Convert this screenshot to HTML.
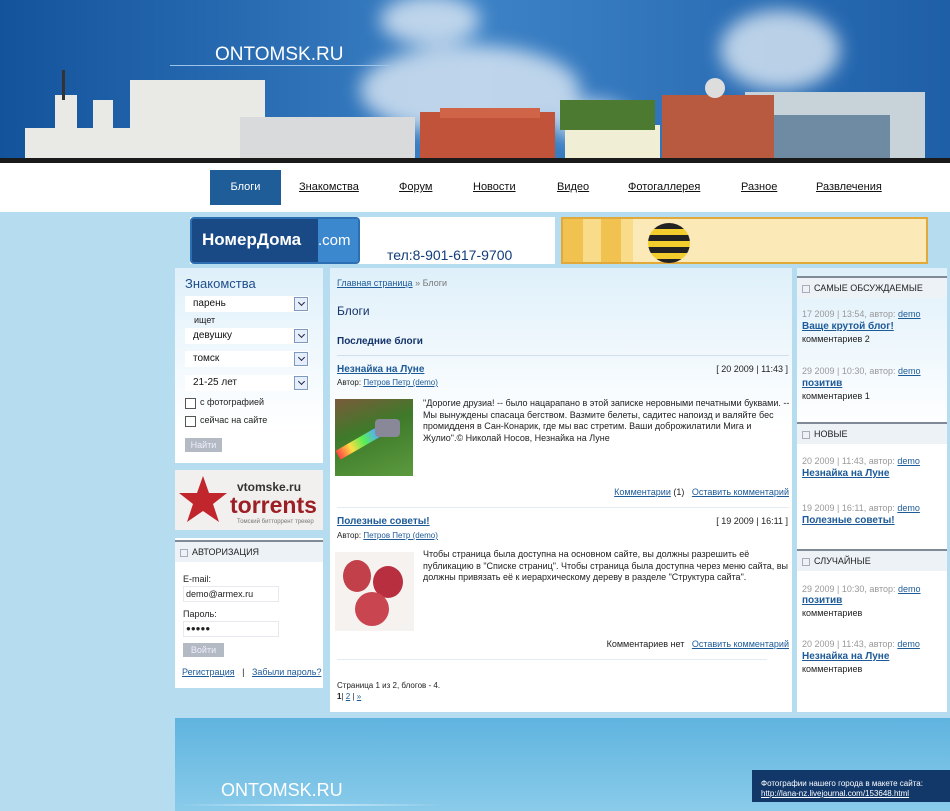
<!DOCTYPE html>
<html><head><meta charset="utf-8"><style>
*{margin:0;padding:0;box-sizing:border-box}
body{width:950px;height:811px;overflow:hidden;background:#b5dcef;font-family:"Liberation Sans",sans-serif;font-size:10px;color:#222;position:relative}
a{color:#1d5a98;text-decoration:underline}
.abs{position:absolute}
#nav{top:163px;left:0;width:950px;height:49px;background:#fff}
#nav a{position:absolute;top:18px;color:#111;font-size:11px}
.act{position:absolute;left:210px;top:7px;width:71px;height:35px;background:#1f5d98;color:#fff;font-size:11px;text-align:center;line-height:35px}
.box{background:linear-gradient(#dff0fa,#fff 160px);position:absolute}
.sel{position:absolute;left:10px;width:124px;height:16px;background:#fff;font-size:10px;padding:2px 8px;color:#111}
.sel:after{content:"";position:absolute;right:1px;top:1px;width:12px;height:12px;border:1px solid #7d9bbf;background:#e5eefa}
.sel:before{content:"";position:absolute;right:5px;top:4px;width:4px;height:4px;border-right:1px solid #224;border-bottom:1px solid #224;transform:rotate(45deg);z-index:1}
.cb{position:absolute;left:10px;width:11px;height:11px;border:1px solid #555;background:#fff}
.btn{position:absolute;background:#b3bac3;color:#eef;font-size:9px;text-align:center;line-height:14px}
.hd{position:absolute;left:0;width:100%;height:22px;border-top:2px solid #7f8a96;background:#edf2f7;font-size:9px;line-height:20px;padding-left:17px;color:#222}
.hd:before{content:"";position:absolute;left:5px;top:7px;width:6px;height:6px;border:1px solid #aab}
.gr{color:#999;font-size:9px}
.rb{position:absolute;left:5px;font-size:9px;line-height:12px}
.rb a{font-weight:bold;font-size:10px}
.gr a{font-weight:normal;font-size:9px}
</style></head><body>
<svg class="abs" style="left:0;top:0" width="950" height="163">
<defs><linearGradient id="sk" x1="0" y1="0" x2="1" y2="0"><stop offset="0" stop-color="#13539c"/><stop offset=".5" stop-color="#3d82c6"/><stop offset="1" stop-color="#1e5fa8"/></linearGradient>
<filter id="bl"><feGaussianBlur stdDeviation="9"/></filter></defs>
<rect width="950" height="163" fill="url(#sk)"/>
<g filter="url(#bl)" fill="#dfeaf5" opacity=".8"><ellipse cx="470" cy="90" rx="110" ry="45"/><ellipse cx="430" cy="20" rx="50" ry="25"/><ellipse cx="780" cy="50" rx="60" ry="40"/><ellipse cx="590" cy="120" rx="40" ry="20"/></g>
<text x="215" y="60" fill="#fff" font-family="Liberation Sans" font-size="19">ONTOMSK.RU</text>
<rect x="170" y="65" width="220" height="1" fill="#9cc3e8"/>
<g fill="#e9e9e6"><rect x="25" y="128" width="110" height="32"/><rect x="55" y="95" width="22" height="35"/><rect x="93" y="100" width="20" height="30"/><rect x="130" y="80" width="135" height="80"/><rect x="240" y="117" width="175" height="43" fill="#d8dadc"/><rect x="565" y="125" width="95" height="35" fill="#f0eed4"/><rect x="745" y="92" width="180" height="68" fill="#c7d2d9"/><rect x="760" y="115" width="130" height="45" fill="#6e8ba3"/></g>
<rect x="62" y="70" width="3" height="30" fill="#333"/>
<rect x="420" y="112" width="135" height="48" fill="#c0533a"/><rect x="440" y="108" width="100" height="10" fill="#d06448"/>
<rect x="662" y="95" width="112" height="65" fill="#b85a40"/><circle cx="715" cy="88" r="10" fill="#ddd"/>
<rect x="560" y="100" width="95" height="30" fill="#4b7a30"/>
<rect x="0" y="158" width="950" height="5" fill="#1a1a1a"/>
</svg>
<div id="nav" class="abs"><div class="act">Блоги</div>
<a style="left:299px">Знакомства</a><a style="left:399px">Форум</a><a style="left:473px">Новости</a><a style="left:557px">Видео</a><a style="left:628px">Фотогаллерея</a><a style="left:741px">Разное</a><a style="left:816px">Развлечения</a></div>
<div class="abs" style="left:190px;top:217px;width:365px;height:47px;background:#fff"></div>
<div class="abs" style="left:190px;top:217px;width:170px;height:47px;background:#1a4a86;border-radius:4px;border:2px solid #2c6fb3"><div style="position:absolute;right:0;top:0;width:40px;height:43px;background:#3b88cf"></div><span style="position:absolute;left:10px;top:11px;color:#fff;font-size:17px;font-weight:bold">НомерДома</span><span style="position:absolute;left:126px;top:13px;color:#fff;font-size:15px">.com</span></div>
<div class="abs" style="left:387px;top:247px;color:#123c7a;font-size:14px">тел:8-901-617-9700</div>
<div class="abs" style="left:561px;top:217px;width:367px;height:47px;background:repeating-linear-gradient(90deg,#f2c250 0 20px,#f8dc8a 20px 38px);border:2px solid #e0a93a"><div style="position:absolute;left:70px;top:0;right:0;bottom:0;background:#fbe9b8"></div><div style="position:absolute;left:85px;top:4px;width:42px;height:40px;border-radius:50%;background:repeating-linear-gradient(#222 0 6px,#f2cd2c 6px 12px)"></div></div>
<div class="box" style="left:175px;top:268px;width:148px;height:195px">
<div style="position:absolute;left:10px;top:8px;color:#1f4e8b;font-size:13px">Знакомства</div>
<div class="sel" style="top:28px">парень</div>
<div style="position:absolute;left:19px;top:47px;font-size:9px">ищет</div>
<div class="sel" style="top:60px">девушку</div>
<div class="sel" style="top:83px">томск</div>
<div class="sel" style="top:107px">21-25 лет</div>
<div class="cb" style="top:130px"></div><div style="position:absolute;left:25px;top:129px;font-size:9px">с фотографией</div>
<div class="cb" style="top:148px"></div><div style="position:absolute;left:25px;top:147px;font-size:9px">сейчас на сайте</div>
<div class="btn" style="left:10px;top:170px;width:37px">Найти</div></div>
<div class="abs" style="left:175px;top:470px;width:148px;height:60px;background:#f2f0ee">
<svg class="abs" style="left:4px;top:4px" width="48" height="50"><polygon points="24,2 30,19 48,19 34,30 40,48 24,37 8,48 14,30 0,19 18,19" fill="#c0262c"/></svg>
<div style="position:absolute;left:62px;top:10px;font-weight:bold;font-size:12px;color:#333">vtomske.ru</div>
<div style="position:absolute;left:55px;top:22px;font-weight:bold;font-size:23px;color:#9b1f24">torrents</div>
<div style="position:absolute;left:62px;top:49px;font-size:6px;color:#777">Томский битторрент трекер</div></div>
<div class="abs" style="left:175px;top:538px;width:148px;height:150px;background:#fff">
<div class="hd" style="top:2px">АВТОРИЗАЦИЯ</div>
<div style="position:absolute;left:8px;top:36px;font-size:9px">E-mail:</div>
<div style="position:absolute;left:8px;top:48px;width:96px;height:16px;background:#fff;border:1px solid #e6eaee;font-size:9px;padding:2px 2px">demo@armex.ru</div>
<div style="position:absolute;left:8px;top:71px;font-size:9px">Пароль:</div>
<div style="position:absolute;left:8px;top:83px;width:96px;height:16px;border:1px solid #e6eaee;font-size:8px;padding:2px 2px">●●●●●</div>
<div class="btn" style="left:8px;top:105px;width:41px;height:14px">Войти</div>
<div style="position:absolute;left:7px;top:129px;font-size:9px;white-space:nowrap"><a>Регистрация</a> &nbsp; | &nbsp; <a>Забыли пароль?</a></div></div>
<div class="box" style="left:330px;top:268px;width:462px;height:444px">
<div style="position:absolute;left:7px;top:10px;font-size:9px"><a>Главная страница</a> <span style="color:#777">» Блоги</span></div>
<div style="position:absolute;left:7px;top:36px;font-size:12px;color:#14336a">Блоги</div>
<div style="position:absolute;left:7px;top:68px;font-size:10px;font-weight:bold;color:#14336a">Последние блоги</div>
<div style="position:absolute;left:7px;top:87px;width:452px;height:1px;background:#cfdfeb"></div>
<a style="position:absolute;left:7px;top:96px;font-weight:bold">Незнайка на Луне</a><div style="position:absolute;right:4px;top:96px;font-size:9px">[ 20 2009 | 11:43 ]</div>
<div style="position:absolute;left:7px;top:110px;font-size:8px">Автор: <a>Петров Петр (demo)</a></div>
<div style="position:absolute;left:5px;top:131px;width:78px;height:77px;background:linear-gradient(160deg,#7a5a3a,#3e7a2a 40%,#5c9a3e)"><div style="position:absolute;left:0;top:40px;width:45px;height:10px;background:linear-gradient(90deg,#f44,#fd4,#5e5,#5af);transform:rotate(-30deg)"></div><div style="position:absolute;left:40px;top:20px;width:25px;height:18px;background:#889;border-radius:4px"></div></div>
<div style="position:absolute;left:93px;top:130px;width:368px;font-size:9px;line-height:11.5px">"Дорогие друзиа! -- было нацарапано в этой записке неровными печатными буквами. -- Мы вынуждены спасаца бегством. Вазмите белеты, садитес напоизд и валяйте бес промидденя в Сан-Конарик, где мы вас стретим. Ваши доброжилатили Мига и Жулио".© Николай Носов, Незнайка на Луне</div>
<div style="position:absolute;right:3px;top:219px;font-size:9px"><a>Комментарии</a> (1) &nbsp; <a>Оставить комментарий</a></div>
<div style="position:absolute;left:7px;top:239px;width:452px;height:1px;background:#e3ecf2"></div>
<a style="position:absolute;left:7px;top:248px;font-weight:bold">Полезные советы!</a><div style="position:absolute;right:4px;top:248px;font-size:9px">[ 19 2009 | 16:11 ]</div>
<div style="position:absolute;left:7px;top:263px;font-size:8px">Автор: <a>Петров Петр (demo)</a></div>
<div style="position:absolute;left:5px;top:284px;width:79px;height:79px;background:#f5f2f0"><div style="position:absolute;left:8px;top:8px;width:28px;height:32px;border-radius:50%;background:#c2404a"></div><div style="position:absolute;left:38px;top:14px;width:30px;height:32px;border-radius:50%;background:#b83040"></div><div style="position:absolute;left:20px;top:40px;width:34px;height:34px;border-radius:50%;background:#c94550"></div></div>
<div style="position:absolute;left:93px;top:281px;width:368px;font-size:9px;line-height:11.5px">Чтобы страница была доступна на основном сайте, вы должны разрешить её публикацию в "Списке страниц". Чтобы страница была доступна через меню сайта, вы должны привязать её к иерархическому дереву в разделе "Структура сайта".</div>
<div style="position:absolute;right:3px;top:371px;font-size:9px">Комментариев нет &nbsp; <a>Оставить комментарий</a></div>
<div style="position:absolute;left:7px;top:391px;width:430px;height:1px;background:#e3ecf2"></div>
<div style="position:absolute;left:7px;top:413px;font-size:8px">Страница 1 из 2, блогов - 4.</div>
<div style="position:absolute;left:7px;top:424px;font-size:8px"><b>1</b>| <a>2</a> | <a>»</a></div></div>
<div class="box" style="left:797px;top:268px;width:150px;height:444px">
<div class="hd" style="top:8px">САМЫЕ ОБСУЖДАЕМЫЕ</div>
<div class="rb gr" style="top:40px">17 2009 | 13:54, автор: <a>demo</a></div>
<div class="rb" style="top:52px"><a>Ваще крутой блог!</a><br>комментариев 2</div>
<div class="rb gr" style="top:97px">29 2009 | 10:30, автор: <a>demo</a></div>
<div class="rb" style="top:109px"><a>позитив</a><br>комментариев 1</div>
<div class="hd" style="top:154px">НОВЫЕ</div>
<div class="rb gr" style="top:187px">20 2009 | 11:43, автор: <a>demo</a></div>
<div class="rb" style="top:199px"><a>Незнайка на Луне</a></div>
<div class="rb gr" style="top:234px">19 2009 | 16:11, автор: <a>demo</a></div>
<div class="rb" style="top:246px"><a>Полезные советы!</a></div>
<div class="hd" style="top:281px">СЛУЧАЙНЫЕ</div>
<div class="rb gr" style="top:315px">29 2009 | 10:30, автор: <a>demo</a></div>
<div class="rb" style="top:326px"><a>позитив</a><br>комментариев</div>
<div class="rb gr" style="top:370px">20 2009 | 11:43, автор: <a>demo</a></div>
<div class="rb" style="top:382px"><a>Незнайка на Луне</a><br>комментариев</div></div>
<div class="abs" style="left:175px;top:718px;width:775px;height:93px;background:linear-gradient(#5fb4df,#8acbea)">
<div style="position:absolute;left:46px;top:62px;color:#fff;font-size:18px">ONTOMSK.RU</div>
<div style="position:absolute;left:0;top:86px;width:270px;height:2px;background:linear-gradient(90deg,transparent,#cfe9f7,transparent)"></div>
<div style="position:absolute;left:577px;top:52px;width:198px;height:32px;background:#12386a;color:#fff;font-size:8px;padding:9px 9px;line-height:10px">Фотографии нашего города в макете сайта:<br><u>http://lana-nz.livejournal.com/153648.html</u></div></div>
</body></html>
